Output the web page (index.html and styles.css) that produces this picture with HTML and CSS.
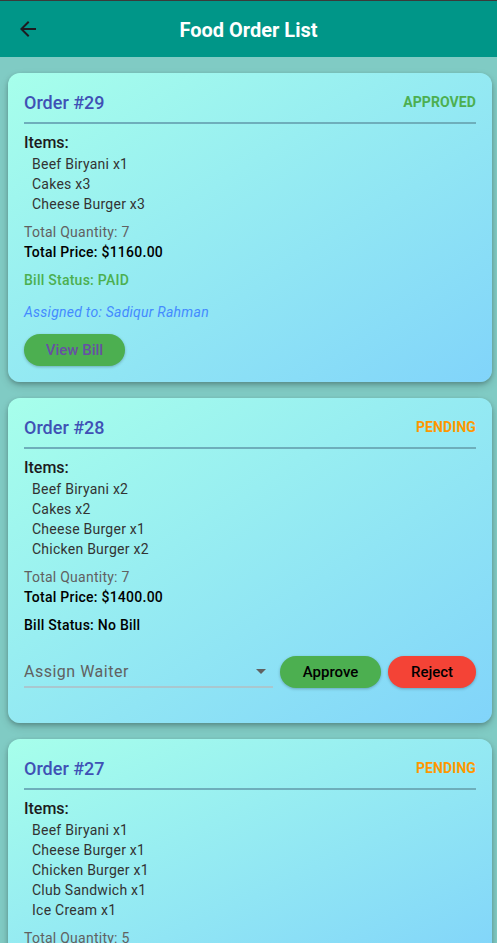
FILE: index.html
```html
<!DOCTYPE html>
<html>
<head>
<meta charset="utf-8">
<link rel="stylesheet" href="styles.css">
</head>
<body>
<header class="appbar">
  <svg class="back" viewBox="0 0 24 24" width="24" height="24"><path d="M20 11H7.83l5.59-5.59L12 4l-8 8 8 8 1.41-1.41L7.83 13H20v-2z" fill="#1d1b20"/></svg>
  <h1 class="title">Food Order List</h1>
  <span></span>
</header>
<main class="list">
  <section class="card">
    <div class="head"><span class="order">Order #29</span><span class="status approved">APPROVED</span></div>
    <div class="divider"></div>
    <div class="items-h">Items:</div>
    <ul class="items">
      <li>Beef Biryani x1</li>
      <li>Cakes x3</li>
      <li>Cheese Burger x3</li>
    </ul>
    <div class="qty">Total Quantity: 7</div>
    <div class="price">Total Price: $1160.00</div>
    <div class="bill paid">Bill Status: PAID</div>
    <div class="assigned">Assigned to: Sadiqur Rahman</div>
    <button class="btn view">View Bill</button>
  </section>
  <section class="card">
    <div class="head"><span class="order">Order #28</span><span class="status pending">PENDING</span></div>
    <div class="divider"></div>
    <div class="items-h">Items:</div>
    <ul class="items">
      <li>Beef Biryani x2</li>
      <li>Cakes x2</li>
      <li>Cheese Burger x1</li>
      <li>Chicken Burger x2</li>
    </ul>
    <div class="qty">Total Quantity: 7</div>
    <div class="price">Total Price: $1400.00</div>
    <div class="bill">Bill Status: No Bill</div>
    <div class="actions">
      <div class="dropdown">
        <span class="ph">Assign Waiter</span>
        <svg class="caret" viewBox="0 0 24 24" width="24" height="24"><path d="M7 10l5 5 5-5z" fill="#616161"/></svg>
      </div>
      <button class="btn approve">Approve</button>
      <button class="btn reject">Reject</button>
    </div>
  </section>
  <section class="card">
    <div class="head"><span class="order">Order #27</span><span class="status pending">PENDING</span></div>
    <div class="divider"></div>
    <div class="items-h">Items:</div>
    <ul class="items">
      <li>Beef Biryani x1</li>
      <li>Cheese Burger x1</li>
      <li>Chicken Burger x1</li>
      <li>Club Sandwich x1</li>
      <li>Ice Cream x1</li>
    </ul>
    <div class="qty">Total Quantity: 5</div>
  </section>
</main>
</body>
</html>
```
FILE: styles.css
```css
html, body {
  margin: 0;
  padding: 0;
}
body {
  background: #80CBC4;
  font-family: Roboto, "Noto Sans", sans-serif;
  color: #1d1b20;
  height: 943px;
  overflow: hidden;
}
.appbar {
  border-top: 1px solid #3a3a3a;
  height: 56px;
  background: #009688;
  display: grid;
  grid-template-columns: 56px 1fr 56px;
  align-items: center;
}
.back {
  margin-left: 16px;
}
.title {
  margin: 2px 0 0;
  text-align: center;
  color: #fff;
  font-size: 20px;
  font-weight: 700;
  letter-spacing: 0;
}
.list {
  padding: 16px 5px 16px 8px;
  display: flex;
  flex-direction: column;
  gap: 16px;
}
.card {
  border-radius: 12px;
  padding: 16px;
  background: linear-gradient(to bottom right, #A7FFEB, #81D4FA);
  box-shadow: 0 2px 4px rgba(0,0,0,0.22), 0 4px 10px rgba(0,0,0,0.14);
}
.head {
  height: 26px;
  display: flex;
  justify-content: space-between;
  align-items: center;
}
.order {
  font-size: 18px;
  font-weight: 500;
  color: #3F51B5;
}
.status {
  font-size: 14px;
  font-weight: 700;
  letter-spacing: 0.1px;
}
.approved { color: #4CAF50; }
.pending { color: #FF9800; }
.divider {
  height: 2px;
  background: #6eaebb;
  margin: 7px 0;
}
.items-h {
  font-size: 16px;
  font-weight: 500;
  line-height: 23px;
  color: #1d1b20;
}
.items {
  list-style: none;
  margin: 0 0 8px 0;
  padding: 0 0 0 8px;
}
.items li {
  font-size: 14px;
  line-height: 20px;
  letter-spacing: 0.25px;
  color: #333;
}
.qty {
  font-size: 14px;
  line-height: 20px;
  letter-spacing: 0.25px;
  color: #616161;
}
.price {
  font-size: 14px;
  line-height: 20px;
  font-weight: 500;
  letter-spacing: 0.25px;
  color: #000;
}
.bill {
  margin-top: 8px;
  font-size: 14px;
  line-height: 20px;
  font-weight: 500;
  letter-spacing: 0.25px;
  color: #000;
}
.bill.paid { color: #4CAF50; }
.assigned {
  margin-top: 12px;
  font-size: 14px;
  line-height: 20px;
  font-style: italic;
  letter-spacing: 0.25px;
  color: #448AFF;
}
.btn {
  height: 32px;
  border: none;
  border-radius: 16px;
  font-family: Roboto, "Noto Sans", sans-serif;
  font-size: 15px;
  font-weight: 500;
  padding: 0;
  white-space: nowrap;
  box-shadow: 0 1px 3px rgba(0,0,0,0.25);
  display: block;
}
.view {
  margin-top: 12px;
  width: 101px;
  background: #4CAF50;
  color: #6750A4;
}
.actions {
  margin: 21px 0 19px;
  display: flex;
  align-items: center;
  gap: 7px;
}
.dropdown {
  flex: 1;
  height: 32px;
  border-bottom: 2px solid #a9c7cf;
  display: flex;
  align-items: center;
  justify-content: space-between;
  box-sizing: border-box;
  padding-right: 0;
}
.ph {
  font-size: 16px;
  letter-spacing: 0.5px;
  color: #616161;
}
.approve {
  width: 101px;
  background: #4CAF50;
  color: #000;
}
.reject {
  width: 88px;
  background: #F44336;
  color: #000;
}
```
